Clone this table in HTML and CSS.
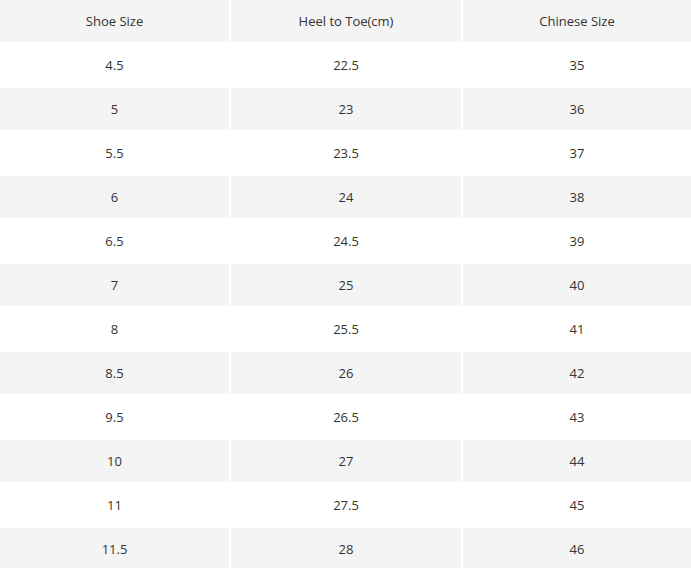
FILE: index.html
```html
<!DOCTYPE html>
<html>
<head>
<meta charset="utf-8">
<link rel="stylesheet" href="styles.css">
</head>
<body>
<table class="size-table">
  <colgroup><col class="c1"><col class="c2"><col class="c3"></colgroup>
  <thead>
    <tr class="shade"><th>Shoe Size</th><th>Heel to Toe(cm)</th><th>Chinese Size</th></tr>
  </thead>
  <tbody>
    <tr><td>4.5</td><td>22.5</td><td>35</td></tr>
    <tr class="shade"><td>5</td><td>23</td><td>36</td></tr>
    <tr><td>5.5</td><td>23.5</td><td>37</td></tr>
    <tr class="shade"><td>6</td><td>24</td><td>38</td></tr>
    <tr><td>6.5</td><td>24.5</td><td>39</td></tr>
    <tr class="shade"><td>7</td><td>25</td><td>40</td></tr>
    <tr><td>8</td><td>25.5</td><td>41</td></tr>
    <tr class="shade"><td>8.5</td><td>26</td><td>42</td></tr>
    <tr><td>9.5</td><td>26.5</td><td>43</td></tr>
    <tr class="shade"><td>10</td><td>27</td><td>44</td></tr>
    <tr><td>11</td><td>27.5</td><td>45</td></tr>
    <tr class="shade"><td>11.5</td><td>28</td><td>46</td></tr>
  </tbody>
</table>
</body>
</html>
```
FILE: styles.css
```css
html, body {
  margin: 0;
  padding: 0;
  background: #fff;
}
.size-table {
  width: 691px;
  table-layout: fixed;
  border-collapse: separate;
  border-spacing: 0;
  font-family: "Open Sans", "Noto Sans", sans-serif;
  font-size: 13px;
  color: #333;
}
.c1 { width: 231px; }
.c2 { width: 232px; }
.c3 { width: 228px; }
.size-table th,
.size-table td {
  height: 42px;
  padding: 0;
  text-align: center;
  vertical-align: middle;
  font-weight: normal;
  border-bottom: 2px solid #fff;
  border-right: 2px solid #fff;
}
.size-table th:last-child,
.size-table td:last-child {
  border-right: 0;
}
.shade th,
.shade td {
  background: #f4f4f4;
}
```
